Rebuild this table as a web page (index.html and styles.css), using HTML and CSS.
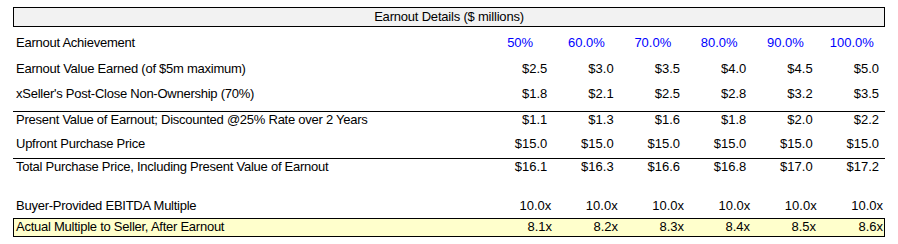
FILE: index.html
```html
<!DOCTYPE html>
<html>
<head>
<meta charset="utf-8">
<link rel="stylesheet" href="styles.css">
</head>
<body>
<div class="sheet">
  <div class="title">Earnout Details ($ millions)</div>

  <div class="row row-achieve">
    <div class="lbl">Earnout Achievement</div>
    <div class="pct">50%</div><div class="pct">60.0%</div><div class="pct">70.0%</div><div class="pct">80.0%</div><div class="pct">90.0%</div><div class="pct">100.0%</div>
  </div>

  <div class="row row-earned">
    <div class="lbl">Earnout Value Earned (of $5m maximum)</div>
    <div class="num">$2.5</div><div class="num">$3.0</div><div class="num">$3.5</div><div class="num">$4.0</div><div class="num">$4.5</div><div class="num">$5.0</div>
  </div>

  <div class="row row-seller">
    <div class="lbl">xSeller's Post-Close Non-Ownership (70%)</div>
    <div class="num">$1.8</div><div class="num">$2.1</div><div class="num">$2.5</div><div class="num">$2.8</div><div class="num">$3.2</div><div class="num">$3.5</div>
  </div>

  <div class="row row-pv ruled">
    <div class="lbl">Present Value of Earnout; Discounted @25% Rate over 2 Years</div>
    <div class="num">$1.1</div><div class="num">$1.3</div><div class="num">$1.6</div><div class="num">$1.8</div><div class="num">$2.0</div><div class="num">$2.2</div>
  </div>

  <div class="row row-upfront">
    <div class="lbl">Upfront Purchase Price</div>
    <div class="num">$15.0</div><div class="num">$15.0</div><div class="num">$15.0</div><div class="num">$15.0</div><div class="num">$15.0</div><div class="num">$15.0</div>
  </div>

  <div class="row row-total ruled">
    <div class="lbl">Total Purchase Price, Including Present Value of Earnout</div>
    <div class="num">$16.1</div><div class="num">$16.3</div><div class="num">$16.6</div><div class="num">$16.8</div><div class="num">$17.0</div><div class="num">$17.2</div>
  </div>

  <div class="row row-buyer">
    <div class="lbl">Buyer-Provided EBITDA Multiple</div>
    <div class="mult">10.0x</div><div class="mult">10.0x</div><div class="mult">10.0x</div><div class="mult">10.0x</div><div class="mult">10.0x</div><div class="mult">10.0x</div>
  </div>

  <div class="row row-actual highlight">
    <div class="lbl">Actual Multiple to Seller, After Earnout</div>
    <div class="mult">8.1x</div><div class="mult">8.2x</div><div class="mult">8.3x</div><div class="mult">8.4x</div><div class="mult">8.5x</div><div class="mult">8.6x</div>
  </div>
</div>
</body>
</html>
```

FILE: styles.css
```css
html, body {
  margin: 0;
  padding: 0;
  background: #ffffff;
}

body {
  font-family: "Liberation Sans", Arial, sans-serif;
  font-size: 13px;
  color: #000000;
}

.sheet {
  width: 872px;
  padding: 7px 0 0 13px;
}

.title {
  box-sizing: border-box;
  height: 20px;
  line-height: 18px;
  border: 1px solid #000000;
  background: #f2f2f2;
  text-align: center;
  letter-spacing: -0.2px;
}

.row {
  display: grid;
  grid-template-columns: 474px repeat(6, 1fr);
  line-height: 15px;
  white-space: nowrap;
}

.lbl {
  padding-left: 3px;
  letter-spacing: -0.25px;
}

.pct {
  color: #0000ff;
  text-align: center;
}

.num {
  text-align: right;
  padding-right: 6px;
}

.mult {
  text-align: right;
  padding-right: 2px;
}

.ruled {
  border-top: 1px solid #000000;
}

.highlight {
  box-sizing: border-box;
  border: 1px solid #000000;
  background: #ffffcc;
  padding-bottom: 2px;
}

.row-achieve { padding-top: 8px; }
.row-earned  { padding-top: 11px; }
.row-seller  { padding-top: 10px; }
.row-pv      { margin-top: 10px; }
.row-upfront { padding-top: 9px; }
.row-total   { margin-top: 7px; }
.row-buyer   { padding-top: 24px; }
.row-actual  { margin-top: 5px; }
.row-actual .lbl { padding-left: 2px; }
.row-actual .mult:last-child { padding-right: 1px; }
```
